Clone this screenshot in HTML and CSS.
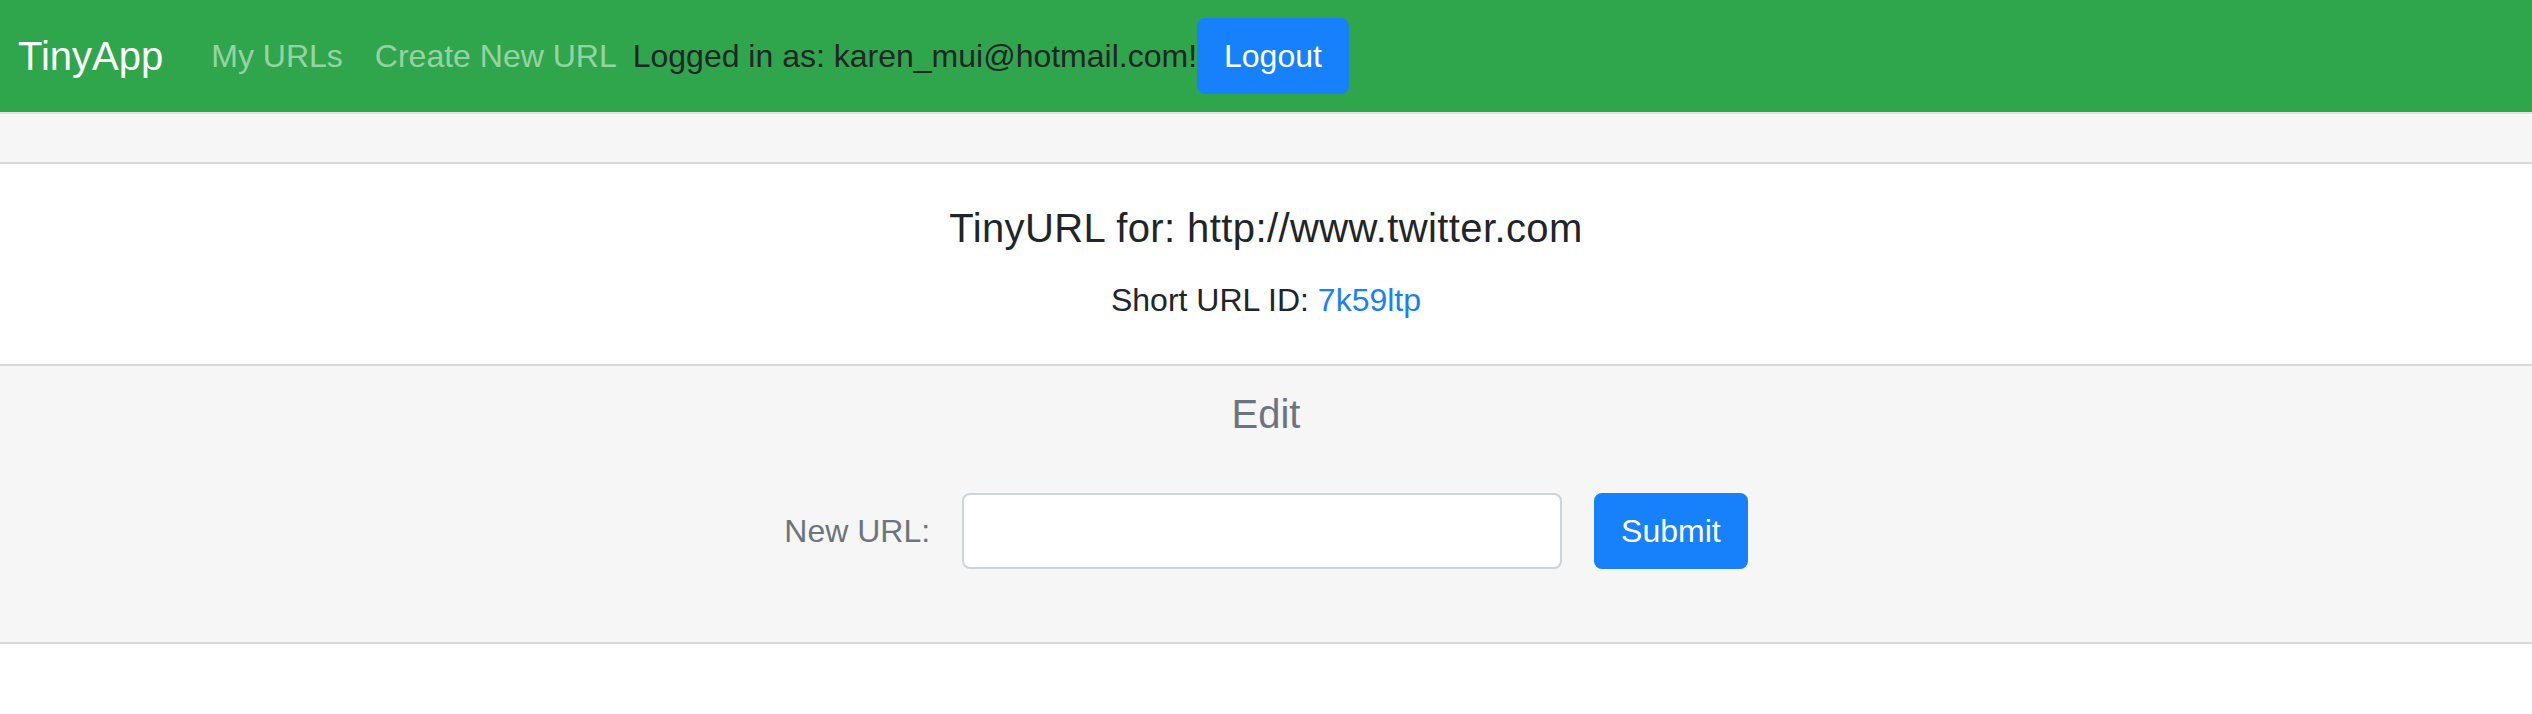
FILE: index.html
```html
<!DOCTYPE html>
<html lang="en">
<head>
<meta charset="utf-8">
<title>TinyApp</title>
<link rel="stylesheet" href="styles.css">
</head>
<body>
<nav class="navbar">
  <a class="brand" href="#">TinyApp</a>
  <div class="nav">
    <a class="nav-link" href="#">My URLs</a>
    <a class="nav-link" href="#">Create New URL</a>
  </div>
  <span class="user">Logged in as: karen_mui@hotmail.com!</span>
  <button class="btn" type="button">Logout</button>
</nav>
<div class="card">
  <div class="card-header"></div>
  <div class="card-body">
    <h5 class="card-title">TinyURL for: http://www.twitter.com</h5>
    <p class="card-text">Short URL ID: <a class="link" href="#">7k59ltp</a></p>
  </div>
  <div class="card-footer">
    <h5 class="muted-title">Edit</h5>
    <form class="edit-form">
      <label class="form-label" for="newurl">New URL:</label>
      <input class="form-input" id="newurl" type="text">
      <button class="btn" type="button">Submit</button>
    </form>
  </div>
</div>
</body>
</html>
```

FILE: styles.css
```css
* { box-sizing: border-box; }
html, body { margin: 0; padding: 0; }
body {
  font-family: "Liberation Sans", Arial, Helvetica, sans-serif;
  font-size: 32px;
  line-height: 1.5;
  color: #212529;
  background: #fff;
}
.navbar {
  display: flex;
  align-items: center;
  height: 112px;
  padding: 16px 18px;
  background: #2fa64c;
}
.brand {
  font-size: 40px;
  line-height: 60px;
  padding: 10px 0;
  margin-right: 32px;
  color: #fff;
  text-decoration: none;
}
.nav { display: flex; }
.nav-link {
  padding: 16px 16px;
  color: rgba(255,255,255,0.5);
  text-decoration: none;
}
.user { color: #212529; }
.btn {
  font-family: inherit;
  font-size: 32px;
  line-height: 48px;
  padding: 12px 25px;
  border: 2px solid #1780fb;
  border-radius: 8px;
  background: #1780fb;
  color: #fff;
}
.card {
  border-top: 2px solid #e2e2e2;
  text-align: center;
}
.card-header {
  height: 50px;
  background: #f6f6f6;
  border-bottom: 2px solid #d8d8d8;
}
.card-body { padding: 40px; }
.card-title {
  margin: 0 0 24px;
  font-size: 40px;
  font-weight: 500;
  line-height: 48px;
  letter-spacing: 0.4px;
}
.card-text { margin: 0; line-height: 48px; }
.link { color: #1780fb; text-decoration: none; }
.card-footer {
  padding: 24px 40px;
  background: #f6f6f6;
  border-top: 2px solid #d8d8d8;
  border-bottom: 2px solid #d8d8d8;
}
.muted-title {
  margin: 0;
  font-size: 40px;
  font-weight: 500;
  line-height: 48px;
  color: #6c757d;
}
.edit-form {
  display: flex;
  justify-content: center;
  align-items: center;
  gap: 32px;
  margin: 55px 0 49px;
}
.form-label { color: #6c757d; }
.form-input {
  width: 600px;
  height: 76px;
  padding: 12px 24px;
  font-family: inherit;
  font-size: 32px;
  border: 2px solid #ced4da;
  border-radius: 8px;
  background: #fff;
}
```
